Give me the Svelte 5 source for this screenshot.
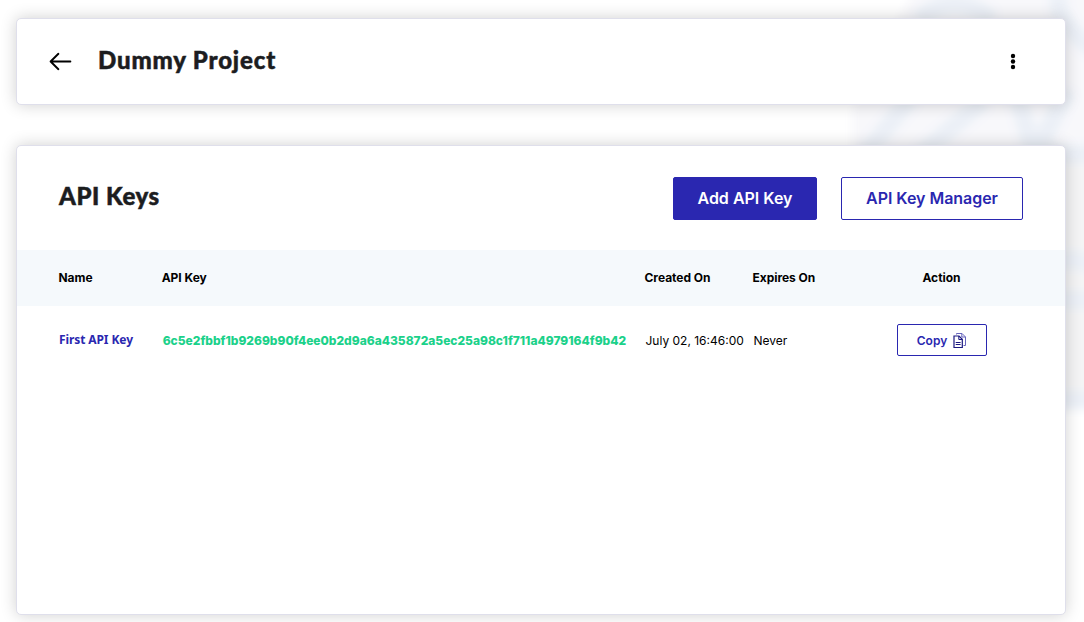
<script>
  const keys = [
    {
      name: 'First API Key',
      key: '6c5e2fbbf1b9269b90f4ee0b2d9a6a435872a5ec25a98c1f711a4979164f9b42',
      created: 'July 02, 16:46:00',
      expires: 'Never'
    }
  ];
</script>

<div class="page">
  <svg class="backdrop" width="240" height="420" viewBox="0 0 240 420" aria-hidden="true">
    <defs>
      <filter id="soft" x="-20%" y="-20%" width="140%" height="140%"><feGaussianBlur stdDeviation="5" /></filter>
    </defs>
    <g filter="url(#soft)">
      <path d="M75 -20H260V410H180L8 150V110Z" fill="#f8f8fb" />
      <path d="M180 160H260V408H180Z" fill="#f4f4f5" />
      <g fill="none" stroke="#ebf0f7" stroke-width="18">
        <path d="M75 20Q110 -12 148 20M216 -5Q208 18 250 50" />
        <path d="M20 156L68 96M75 156L140 100M172 90L190 156L224 90" />
        <path d="M205 154H260M205 265Q235 252 260 272M205 300H260M205 400H260" />
      </g>
    </g>
  </svg>

  <header class="card top">
    <button class="icon" aria-label="Back">
      <svg width="24" height="20" viewBox="0 0 24 20" fill="none" stroke="#000" stroke-width="1.9" stroke-linecap="round" stroke-linejoin="round">
        <path d="M22.4 9.5H2.6M10.4 1.8L2.6 9.5L10.4 17.2" />
      </svg>
    </button>
    <h1>Dummy Project</h1>
    <button class="icon more" aria-label="More">
      <svg width="6" height="18" viewBox="0 0 6 18"><circle cx="3" cy="3" r="2.2" /><circle cx="3" cy="8.5" r="2.2" /><circle cx="3" cy="14" r="2.2" /></svg>
    </button>
  </header>

  <main class="card panel">
    <div class="heading">
      <h2>API Keys</h2>
      <button class="btn primary">Add API Key</button>
      <button class="btn manager">API Key Manager</button>
    </div>
    <div class="row head">
      <span>Name</span><span>API Key</span><span>Created On</span><span>Expires On</span><span class="action">Action</span>
    </div>
    {#each keys as item}
      <div class="row body">
        <span class="name">{item.name}</span>
        <span class="key">{item.key}</span>
        <span>{item.created}</span>
        <span>{item.expires}</span>
        <span class="action">
          <button class="copy">
            Copy
            <svg width="14" height="17" viewBox="0 0 14 17" fill="none" stroke="#1b1880">
              <path d="M3.5 2.5V1.5H9L12.5 5V13.5H10.5M8.8 1.5V5H12.5" stroke="#6664bd" />
              <path d="M1 4H6L9.3 7.3V15.5H1Z" stroke-width="1.2" />
              <path d="M5.8 4V7.5H9.3" />
              <path d="M2.7 10.5H7.6M2.7 12.5H7.6" />
            </svg>
          </button>
        </span>
      </div>
    {/each}
  </main>
</div>

<style>
  :global(body) { background: #fff; overflow: hidden; }
  .page {
    position: relative;
    box-sizing: border-box;
    height: 622px;
    padding: 18px 18px 7px 16px;
    overflow: hidden;
    display: flex;
    flex-direction: column;
    gap: 40px;
    font-family: Inter, sans-serif;
    font-size: 12px;
    color: #000;
  }
  .backdrop { position: absolute; right: 0; top: 0; }
  .card {
    position: relative;
    box-sizing: border-box;
    background: #fff;
    border: 1px solid #dfdfeb;
    border-radius: 5px;
    box-shadow: 0 0 16px rgba(0, 0, 0, 0.19);
  }
  .top { height: 87px; display: flex; align-items: center; padding: 0 49px 0 31px; }
  .panel { height: 470px; }
  h1, h2 {
    margin: 0;
    font-family: Lato, sans-serif;
    font-weight: 900;
    font-size: 24px;
    line-height: 30px;
    color: #1c1d1f;
    -webkit-text-stroke: 0.5px #1c1d1f;
  }
  h1 { margin: 0 auto 4px 26px; letter-spacing: 0.85px; }
  h2 { margin-right: auto; margin-bottom: 4px; letter-spacing: 0.55px; }
  button { font: inherit; cursor: pointer; padding: 0; box-sizing: border-box; }
  .icon { border: 0; background: none; display: flex; }
  .heading { height: 104px; box-sizing: border-box; display: flex; align-items: center; padding: 0 42px; }
  .btn {
    height: 43px;
    border: 1px solid #2a27b0;
    border-radius: 2px;
    background: #fff;
    color: #2a27b0;
    font-size: 16px;
    font-weight: 600;
  }
  .primary { width: 144px; background: #2a27b0; color: #fff; margin-right: 24px; }
  .manager { width: 182px; letter-spacing: -0.04px; }
  .row {
    display: grid;
    grid-template-columns: 103.2px 482.8px 108px 107px 164px;
    align-items: center;
    padding-left: 41.5px;
    white-space: nowrap;
  }
  .head { box-sizing: border-box; height: 56px; padding-bottom: 1px; background: #f5f9fc; font-weight: 700; letter-spacing: -0.03px; }
  .body { height: 68px; padding-left: 42.5px; }
  .body .action { margin-left: -1px; }
  .action { text-align: center; }
  .name { color: #2a27b0; font-family: "Noto Sans", sans-serif; font-weight: 700; letter-spacing: -0.1px; padding-bottom: 2px; margin-left: -0.5px; }
  .key { color: #1bd18a; font-weight: 800; letter-spacing: -0.01px; }
  .copy {
    width: 90px;
    height: 32px;
    display: inline-flex;
    align-items: center;
    justify-content: center;
    gap: 6px;
    border: 1px solid #2a27b0;
    border-radius: 2px;
    background: #fff;
    color: #2a27b0;
    font-weight: 600;
    vertical-align: middle;
  }
</style>
